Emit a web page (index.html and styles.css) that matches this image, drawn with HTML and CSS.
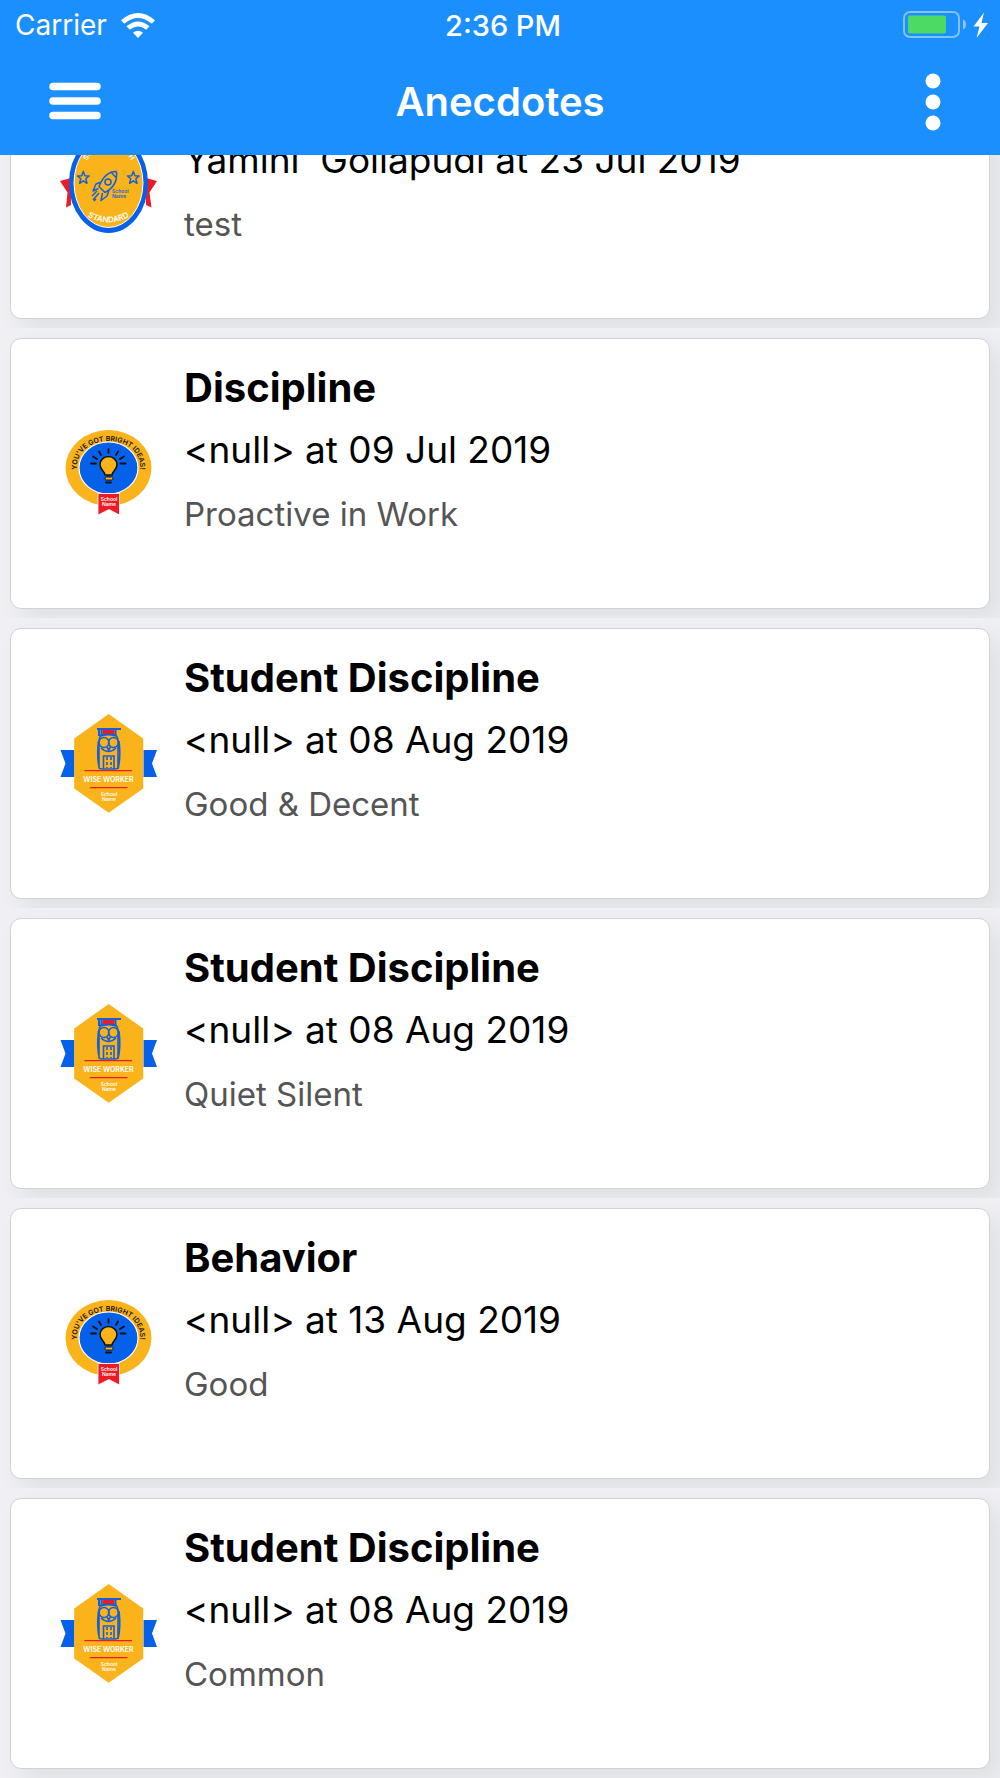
FILE: index.html
```html
<!DOCTYPE html>
<html lang="en">

<head>
  <meta charset="UTF-8" />
  <meta name="viewport" content="width=device-width, initial-scale=1.0" />
  <title>Anecdotes</title>
  <link rel="stylesheet" href="styles.css">
</head>

<body>
  <!-- badge artwork, reused by the cards -->
  <svg class="sprite" aria-hidden="true">
    <symbol id="badge-standard" viewBox="0 0 100 100">
      <path fill="#ed1c24" d="M1 48l11-3v27l-5 2.500l1.500-15zM98 48l-11-3v27l5.500 2.500l-2-15z" />
      <ellipse cx="49.500" cy="50" rx="39.500" ry="50" fill="#0560ea" />
      <ellipse cx="49.500" cy="50" rx="34.500" ry="44.500" fill="#fbb31b" stroke="#fff" stroke-width="1" />
      <g fill="none" stroke="#1560d8" stroke-width="1.500" stroke-linejoin="round">
        <path id="star" d="M24.300 38.500l1.600 4.200l4.200.200l-3.300 2.900l1.200 4.500l-3.700-2.500l-3.700 2.500l1.200-4.500l-3.300-2.900l4.200-.200z" />
        <use href="#star" x="50" />
        <path d="M57 38.500q-11 0-17 15l6 6q13-7 11.500-20.500zM51.500 38.500l6 6.500M42 49l-5 2l-3 7l5.500-2.500M50 57l-2 6l-6 4.500l1.500-7.500M38 58l-5 5M40 60l-6 7M37 66l-2 2" />
        <circle cx="49" cy="49" r="3" />
      </g>
      <path id="arc-std-top" fill="none" d="M27 30C36 8 64 8 73 30" />
      <path id="arc-std" fill="none" d="M22 79Q49.500 100 77 79" />
      <text class="badge-caption badge-light"><textPath href="#arc-std-top" startOffset="50%">SCHOOL EARTH</textPath></text>
      <text class="badge-caption badge-light badge-wide"><textPath href="#arc-std" startOffset="50%">STANDARD</textPath></text>
      <text class="badge-tiny badge-blue" x="53" y="60">School<tspan x="53" dy="5">Name</tspan></text>
    </symbol>

    <symbol id="badge-ideas" viewBox="0 0 100 100">
      <ellipse cx="49.500" cy="45" rx="43" ry="38" fill="#fbb31b" />
      <ellipse cx="49.500" cy="45" rx="29.500" ry="26" fill="#0560ea" stroke="#fff" stroke-width="1.200" />
      <path id="arc-ideas" fill="none" d="M18 48C14 8 85 8 81 48" />
      <text class="badge-caption badge-dark"><textPath href="#arc-ideas" startOffset="50%">YOU'VE GOT BRIGHT IDEAS!</textPath></text>
      <path fill="#fbb31b" stroke="#111" stroke-width="1.500" d="M46 52c0-4-5-5-5-10.500a8.500 8 0 0 1 17 0c0 5.500-5 6.500-5 10.500z" />
      <rect x="46" y="54" width="8" height="3" rx="1.500" fill="#fbb31b" stroke="#111" stroke-width="1" />
      <path stroke="#111" stroke-width="1.800" fill="none" stroke-linecap="round" d="M47 59.500h5M49.500 26v4M40 28.500l2 3.500M59 28.500l-2 3.500M34 33.500l4 2.500M65 33.500l-4 2.500M32 40.500h5M61.500 40.500h5" />
      <path fill="#ed1c24" stroke="#fff" stroke-width=".800" d="M39 70.500h21.500v21.500l-10.500-5.500l-11 5.500z" />
      <text class="badge-tiny badge-light badge-center" x="50" y="78">School<tspan x="50" dy="5">Name</tspan></text>
    </symbol>

    <symbol id="badge-worker" viewBox="0 0 100 100">
      <path fill="#0560ea" d="M1.500 37h14v27h-14l5-13.500zM98 37h-13.500v27h13.500l-5-13.500z" />
      <path fill="#fbb31b" d="M49.700 1l34.500 24.500v50l-34.500 24.200l-34.500-24.200v-50z" />
      <path fill="#ed1c24" d="M43.500 17h12v6q-6-2-12 0zM25.500 57h47.500v1.200h-47.500zM31 74h37.500v1.200h-37.500z" />
      <g fill="none" stroke="#1560d8" stroke-width="1.600">
        <path stroke-width="2" d="M38 16h24M42.500 16v6.500q7-2 14 0v-6.500M40 16v7" />
        <circle cx="45" cy="29.500" r="5" />
        <circle cx="54.500" cy="29.500" r="5" />
        <path d="M42 22q-3 4-2 12v20q0 2 3 2h13q3 0 3-2v-20q1-8-2-12M48 34l1.700 3l1.700-3M42 35q7.500 7 15 0M44.500 56v-13h10.500v13M39.500 28q-2 16 1 28M60 28q2 16-1 28" />
        <path stroke-dasharray="3 2" d="M48 44v11M52 44v11" />
      </g>
      <text class="badge-caption badge-light" x="49.500" y="69">WISE WORKER</text>
      <text class="badge-tiny badge-light badge-center" x="50" y="83">School<tspan x="50" dy="5">Name</tspan></text>
    </symbol>
  </svg>

  <header class="app-header">
    <div class="status-bar">
      <div class="carrier">
        <span>Carrier</span>
        <svg class="wifi" viewBox="0 0 34 25" aria-hidden="true">
          <path fill="#fff" d="M17 25l-5-5.200q5-4 10 0zM5.500 13.300q11.500-9.500 23 0l-3.300 3.400q-8.200-6.500-16.400 0zM0 7.300q17-14.500 34 0l-3.300 3.400q-13.700-11.500-27.400 0z" />
        </svg>
      </div>
      <time class="clock">2:36 PM</time>
      <svg class="battery" viewBox="0 0 85 28" aria-hidden="true">
        <rect x="1" y="1" width="55" height="25" rx="6" fill="none" stroke="#fff" stroke-opacity=".450" stroke-width="2" />
        <rect x="5" y="4.500" width="38" height="18" rx="2" fill="#4cd964" />
        <path fill="#fff" fill-opacity=".500" d="M60 8.500q3 1 3 5t-3 5z" />
        <path fill="#fff" d="M81 1.500l-10.500 14h6l-3 11.500l11.500-15h-6.500z" />
      </svg>
    </div>
    <div class="nav-bar">
      <button class="icon-button menu-button" type="button" aria-label="Menu">
        <svg class="menu-icon" viewBox="0 0 52 38">
          <path stroke="#fff" stroke-width="7.500" stroke-linecap="round" d="M4 4.500h44M4 19h44M4 33.500h44" />
        </svg>
      </button>
      <h1>Anecdotes</h1>
      <button class="icon-button more-button" type="button" aria-label="More options">
        <svg class="more-icon" viewBox="0 0 16 60">
          <g fill="#fff">
            <circle cx="8" cy="10" r="7.500" />
            <circle cx="8" cy="31" r="7.500" />
            <circle cx="8" cy="52" r="7.500" />
          </g>
        </svg>
      </button>
    </div>
  </header>

  <main class="anecdotes">
    <div class="row">
      <article class="card">
        <svg class="badge" aria-hidden="true"><use href="#badge-standard" /></svg>
        <div class="details">
          <h2>Discipline</h2>
          <p class="author">Yamini  Gollapudi at 23 Jul 2019</p>
          <p class="remark">test</p>
        </div>
      </article>
    </div>
    <div class="row">
      <article class="card">
        <svg class="badge" aria-hidden="true"><use href="#badge-ideas" /></svg>
        <div class="details">
          <h2>Discipline</h2>
          <p class="author">&lt;null&gt; at 09 Jul 2019</p>
          <p class="remark">Proactive in Work</p>
        </div>
      </article>
    </div>
    <div class="row">
      <article class="card">
        <svg class="badge" aria-hidden="true"><use href="#badge-worker" /></svg>
        <div class="details">
          <h2>Student Discipline</h2>
          <p class="author">&lt;null&gt; at 08 Aug 2019</p>
          <p class="remark">Good &amp; Decent</p>
        </div>
      </article>
    </div>
    <div class="row">
      <article class="card">
        <svg class="badge" aria-hidden="true"><use href="#badge-worker" /></svg>
        <div class="details">
          <h2>Student Discipline</h2>
          <p class="author">&lt;null&gt; at 08 Aug 2019</p>
          <p class="remark">Quiet Silent</p>
        </div>
      </article>
    </div>
    <div class="row">
      <article class="card">
        <svg class="badge" aria-hidden="true"><use href="#badge-ideas" /></svg>
        <div class="details">
          <h2>Behavior</h2>
          <p class="author">&lt;null&gt; at 13 Aug 2019</p>
          <p class="remark">Good</p>
        </div>
      </article>
    </div>
    <div class="row">
      <article class="card">
        <svg class="badge" aria-hidden="true"><use href="#badge-worker" /></svg>
        <div class="details">
          <h2>Student Discipline</h2>
          <p class="author">&lt;null&gt; at 08 Aug 2019</p>
          <p class="remark">Common</p>
        </div>
      </article>
    </div>
  </main>
</body>

</html>
```

FILE: styles.css
```css
* {
  box-sizing: border-box;
}

body {
  margin: 0;
  font-family: Inter, "Liberation Sans", sans-serif;
  background: #efeff4;
  color: #000;
}

h1,
h2,
p {
  margin: 0;
}

.sprite {
  position: absolute;
  width: 0;
  height: 0;
}

/* header */

.app-header {
  position: sticky;
  top: 0;
  z-index: 1;
  height: 155px;
  background: #1c8fff;
  color: #fff;
}

.status-bar {
  display: grid;
  grid-template-columns: 1fr auto 1fr;
  align-items: center;
  height: 50px;
  padding: 0 12px;
  font-size: 28px;
}

.carrier {
  display: flex;
  align-items: center;
  gap: 14px;
  padding-left: 3px;
}

.wifi {
  width: 34px;
  height: 25px;
}

.clock {
  padding-left: 6px;
  font-size: 29px;
  font-weight: 500;
}

.battery {
  width: 85px;
  height: 28px;
  justify-self: end;
}

.nav-bar {
  display: grid;
  grid-template-columns: 1fr auto 1fr;
  align-items: center;
  height: 102px;
  padding: 0 27px;
}

.nav-bar h1 {
  font-size: 40px;
  font-weight: 600;
}

.icon-button {
  display: flex;
  align-items: center;
  justify-content: center;
  width: 80px;
  height: 80px;
  padding: 0;
  border: none;
  background: none;
  cursor: pointer;
}

.menu-button {
  width: 96px;
}

.more-button {
  justify-self: end;
}

.menu-icon {
  width: 52px;
  height: 38px;
}

.more-icon {
  width: 16px;
  height: 60px;
}

/* list, scrolled a little way under the header */

.anecdotes {
  margin-top: -117px;
}

.row {
  padding: 10px 10px 9px;
  overflow: hidden;
}

.card {
  display: flex;
  align-items: center;
  gap: 25px;
  height: 271px;
  padding: 0 48px 1px;
  background: #fff;
  border: 1px solid #d0d2d3;
  border-radius: 11px;
  box-shadow: 12px 12px 20px rgba(205, 210, 208, 0.45);
}

.badge {
  flex: none;
  width: 100px;
  height: 100px;
}

.details {
  display: flex;
  flex-direction: column;
  gap: 2px;
  align-self: flex-start;
  padding-top: 19px;
}

.details h2 {
  font-size: 40px;
  font-weight: 700;
  line-height: 60px;
}

.author {
  font-size: 37px;
  line-height: 60px;
  white-space: pre-wrap;
}

.remark {
  font-size: 33px;
  line-height: 64px;
  color: #555;
}

/* badge lettering */

.badge-caption {
  font-size: 7px;
  font-weight: 600;
  text-anchor: middle;
}

.badge-wide {
  font-size: 8px;
}

.badge-tiny {
  font-size: 5px;
  font-weight: 600;
}

.badge-center {
  text-anchor: middle;
}

.badge-light {
  fill: #fff;
}

.badge-dark {
  fill: #111;
}

.badge-blue {
  fill: #1560d8;
}
```
